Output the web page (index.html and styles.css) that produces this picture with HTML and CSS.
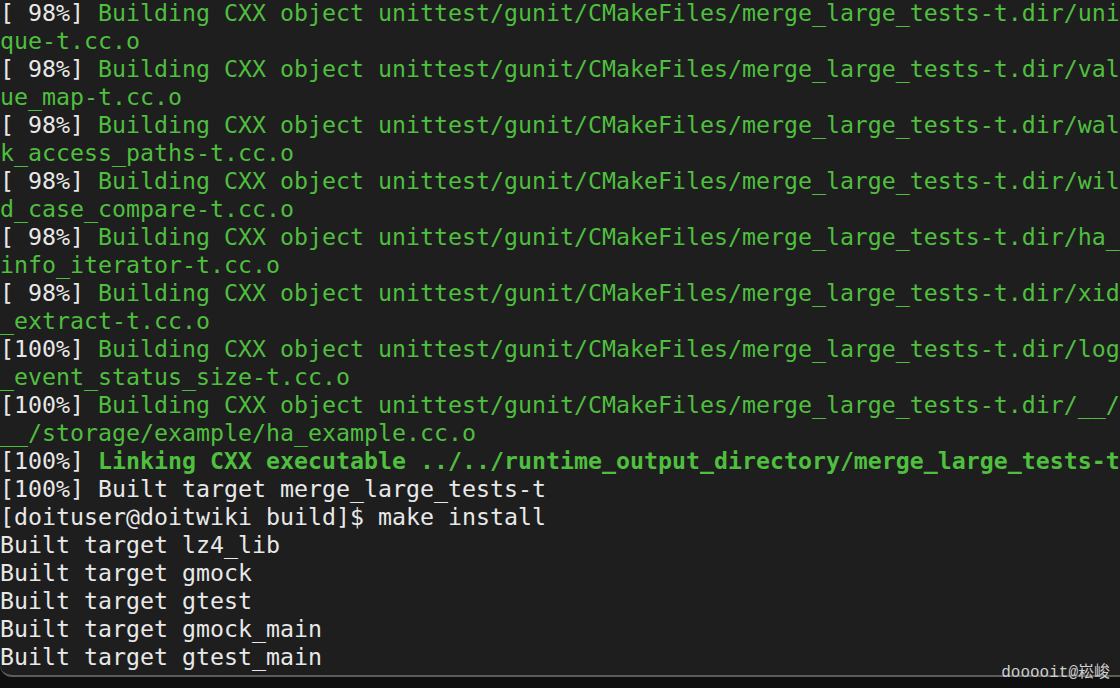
FILE: index.html
```html
<!DOCTYPE html>
<html>
<head>
<meta charset="utf-8">
<link rel="stylesheet" href="styles.css">
</head>
<body>
<div class="term">
<div class="ln"><span class="w">[ 98%]</span> <span class="g">Building CXX object unittest/gunit/CMakeFiles/merge_large_tests-t.dir/uni</span></div>
<div class="ln g">que-t.cc.o</div>
<div class="ln"><span class="w">[ 98%]</span> <span class="g">Building CXX object unittest/gunit/CMakeFiles/merge_large_tests-t.dir/val</span></div>
<div class="ln g">ue_map-t.cc.o</div>
<div class="ln"><span class="w">[ 98%]</span> <span class="g">Building CXX object unittest/gunit/CMakeFiles/merge_large_tests-t.dir/wal</span></div>
<div class="ln g">k_access_paths-t.cc.o</div>
<div class="ln"><span class="w">[ 98%]</span> <span class="g">Building CXX object unittest/gunit/CMakeFiles/merge_large_tests-t.dir/wil</span></div>
<div class="ln g">d_case_compare-t.cc.o</div>
<div class="ln"><span class="w">[ 98%]</span> <span class="g">Building CXX object unittest/gunit/CMakeFiles/merge_large_tests-t.dir/ha_</span></div>
<div class="ln g">info_iterator-t.cc.o</div>
<div class="ln"><span class="w">[ 98%]</span> <span class="g">Building CXX object unittest/gunit/CMakeFiles/merge_large_tests-t.dir/xid</span></div>
<div class="ln g">_extract-t.cc.o</div>
<div class="ln"><span class="w">[100%]</span> <span class="g">Building CXX object unittest/gunit/CMakeFiles/merge_large_tests-t.dir/log</span></div>
<div class="ln g">_event_status_size-t.cc.o</div>
<div class="ln"><span class="w">[100%]</span> <span class="g">Building CXX object unittest/gunit/CMakeFiles/merge_large_tests-t.dir/__/</span></div>
<div class="ln g">__/storage/example/ha_example.cc.o</div>
<div class="ln"><span class="w">[100%]</span> <span class="g b">Linking CXX executable ../../runtime_output_directory/merge_large_tests-t</span></div>
<div class="ln w">[100%] Built target merge_large_tests-t</div>
<div class="ln w">[doituser@doitwiki build]$ make install</div>
<div class="ln w">Built target lz4_lib</div>
<div class="ln w">Built target gmock</div>
<div class="ln w">Built target gtest</div>
<div class="ln w">Built target gmock_main</div>
<div class="ln w">Built target gtest_main</div>
</div>
<div class="mark">dooooit@崧峻</div>
</body>
</html>
```
FILE: styles.css
```css
html, body {
  margin: 0;
  padding: 0;
  background: #0f0f0f;
  width: 1120px;
  height: 688px;
  overflow: hidden;
}
.term {
  height: 678px;
  margin-top: -1px;
  box-sizing: border-box;
  background: #1e1e1e;
  border-bottom: 2px solid #5c5c5c;
  border-bottom-left-radius: 12px;
  overflow: hidden;
  font-family: "DejaVu Sans Mono", "Liberation Mono", monospace;
  font-size: 23.25px;
  line-height: 28px;
}
.ln {
  white-space: pre;
  height: 28px;
}
.w { color: #e8e8e8; }
.g { color: #4fbf3e; }
.b { font-weight: bold; }
.mark {
  position: absolute;
  right: 10px;
  bottom: 5px;
  font-family: "Liberation Mono", "Noto Sans CJK SC", monospace;
  font-size: 16px;
  line-height: 20px;
  color: #cfcfcf;
}
```
